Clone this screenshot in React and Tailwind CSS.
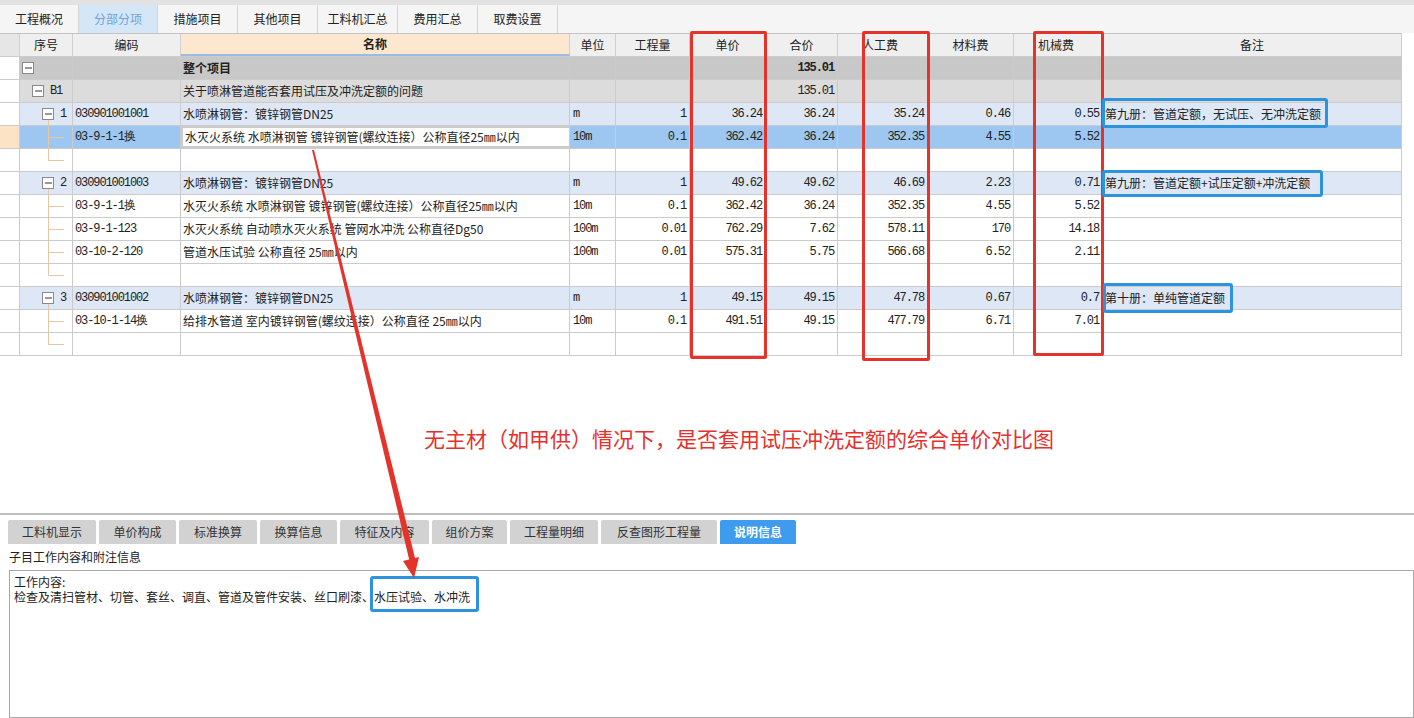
import React from 'react';

const W = ['w-[20px]', 'w-[53px]', 'w-[108px]', 'w-[389px]', 'w-[46px]', 'w-[74px]', 'w-[76px]', 'w-[72px]', 'w-[90px]', 'w-[86px]', 'w-[89px]', 'w-[299px]'];

const topTabs = ['工程概况', '分部分项', '措施项目', '其他项目', '工料机汇总', '费用汇总', '取费设置'];
const bottomTabs = [
  ['工料机显示', 'w-[88px]'],
  ['单价构成', 'w-[77px]'],
  ['标准换算', 'w-[78px]'],
  ['换算信息', 'w-[77px]'],
  ['特征及内容', 'w-[89px]'],
  ['组价方案', 'w-[75px]'],
  ['工程量明细', 'w-[88px]'],
  ['反查图形工程量', 'w-[116px]'],
  ['说明信息', 'w-[76px]'],
];

const headers = ['', '序号', '编码', '名称', '单位', '工程量', '单价', '合价', '人工费', '材料费', '机械费', '备注'];

const pipe = '03-9-1-1换';
const pipeName = '水灭火系统 水喷淋钢管 镀锌钢管(螺纹连接）公称直径25㎜以内';

const rows = [
  { kind: 'root', name: '整个项目', total: '135.01' },
  { kind: 'b1', name: '关于喷淋管道能否套用试压及冲洗定额的问题', total: '135.01' },
  { kind: 'item', seq: '1', code: '030901001001', name: '水喷淋钢管：镀锌钢管DN25', unit: 'm', nums: ['1', '36.24', '36.24', '35.24', '0.46', '0.55'], note: '第九册：管道定额，无试压、无冲洗定额' },
  { kind: 'child', selected: true, code: pipe, name: pipeName, unit: '10m', nums: ['0.1', '362.42', '36.24', '352.35', '4.55', '5.52'] },
  { kind: 'last' },
  { kind: 'item', seq: '2', code: '030901001003', name: '水喷淋钢管：镀锌钢管DN25', unit: 'm', nums: ['1', '49.62', '49.62', '46.69', '2.23', '0.71'], note: '第九册：管道定额+试压定额+冲洗定额' },
  { kind: 'child', code: pipe, name: pipeName, unit: '10m', nums: ['0.1', '362.42', '36.24', '352.35', '4.55', '5.52'] },
  { kind: 'child', code: '03-9-1-123', name: '水灭火系统 自动喷水灭火系统 管网水冲洗 公称直径Dg50', unit: '100m', nums: ['0.01', '762.29', '7.62', '578.11', '170', '14.18'] },
  { kind: 'child', code: '03-10-2-120', name: '管道水压试验 公称直径 25㎜以内', unit: '100m', nums: ['0.01', '575.31', '5.75', '566.68', '6.52', '2.11'] },
  { kind: 'last' },
  { kind: 'item', seq: '3', code: '030901001002', name: '水喷淋钢管：镀锌钢管DN25', unit: 'm', nums: ['1', '49.15', '49.15', '47.78', '0.67', '0.7'], note: '第十册：单纯管道定额' },
  { kind: 'child', code: '03-10-1-14换', name: '给排水管道 室内镀锌钢管(螺纹连接）公称直径 25㎜以内', unit: '10m', nums: ['0.1', '491.51', '49.15', '477.79', '6.71', '7.01'] },
  { kind: 'last' },
];

const mono = "font-['Liberation_Mono',monospace] text-[12px] tracking-[-1.1px]";

const Minus = ({ x }) => (
  <g>
    <rect x={x + 0.5} y={5.5} width={11} height={11} fill="#fff" stroke="#8a8a8a" />
    <line x1={x + 3} y1={11} x2={x + 10} y2={11} stroke="#333" />
  </g>
);

function TreeCell({ kind, seq }) {
  const line = '#e5c7a3';
  return (
    <div className="relative flex h-full w-full items-center">
      <svg className="absolute left-0 top-0" width="53" height="22">
        {kind === 'root' && <Minus x={2} />}
        {kind === 'b1' && <Minus x={12} />}
        {kind === 'item' && (
          <>
            <line x1={28.5} y1={17} x2={28.5} y2={22} stroke={line} />
            <Minus x={22} />
          </>
        )}
        {kind === 'child' && (
          <>
            <line x1={28.5} y1={0} x2={28.5} y2={22} stroke={line} />
            <line x1={28.5} y1={11.5} x2={44} y2={11.5} stroke={line} />
          </>
        )}
        {kind === 'last' && (
          <>
            <line x1={28.5} y1={0} x2={28.5} y2={11.5} stroke={line} />
            <line x1={28.5} y1={11.5} x2={44} y2={11.5} stroke={line} />
          </>
        )}
      </svg>
      {kind === 'b1' && <span className={`relative pl-[30px] ${mono}`}>B1</span>}
      {kind === 'item' && <span className={`relative pl-[40px] ${mono}`}>{seq}</span>}
    </div>
  );
}

function Row({ row }) {
  const { kind, selected } = row;
  const rowBg =
    kind === 'root' ? 'bg-[#c8c8c8]' : kind === 'b1' ? 'bg-[#dcdcdc]' : kind === 'item' ? 'bg-[#dde7f5]' : selected ? 'bg-[#9dc7f0]' : 'bg-white';
  const cell = 'h-full shrink-0 border-r border-[#cbcbcb] flex items-center overflow-hidden whitespace-nowrap';
  const nums = row.nums || [];
  return (
    <div className="flex h-[23px] border-b border-[#cbcbcb]">
      <div className={`${cell} ${W[0]} ${selected ? 'bg-[#fde3c6]' : 'bg-white'}`} />
      <div className={`${cell} ${W[1]} ${rowBg}`}>
        <TreeCell kind={kind} seq={row.seq} />
      </div>
      <div className={`${cell} ${W[2]} ${rowBg} pl-[2px] ${mono}`}>{row.code}</div>
      <div
        className={`${cell} ${W[3]} ${selected ? 'bg-white border-2 border-[#2e2e2e]' : rowBg} pl-[2px] ${kind === 'root' ? 'font-bold' : ''}`}
      >
        {row.name}
      </div>
      <div className={`${cell} ${W[4]} ${rowBg} pl-[3px] ${mono}`}>{row.unit}</div>
      {[0, 1, 2, 3, 4, 5].map((i) => (
        <div key={i} className={`${cell} ${W[5 + i]} ${rowBg} justify-end pr-[3px] ${mono} ${kind === 'root' ? 'font-bold' : ''}`}>
          {i === 2 && row.total ? row.total : nums[i]}
        </div>
      ))}
      <div className={`${cell} ${W[11]} ${rowBg} pl-[2px] text-[12px]`}>{row.note}</div>
    </div>
  );
}

function Grid() {
  return (
    <div className="relative w-[1402px] border-t border-r border-[#c4c4c4]">
      <div className="flex h-[23px] border-b border-[#cbcbcb] bg-[#efefef]">
        {headers.map((h, i) => (
          <div
            key={i}
            className={`${W[i]} h-full shrink-0 border-r border-[#cfcfcf] flex items-center ${
              i === 3 ? 'justify-center bg-[#fde8cf] border-b-2 border-b-[#9cbbe2] font-bold' : i === 8 || i === 10 ? 'pl-[24px]' : 'justify-center'
            } ${i === 0 ? 'bg-[#e6e6e6]' : ''}`}
          >
            {h}
          </div>
        ))}
      </div>
      {rows.map((r, i) => (
        <Row key={i} row={r} />
      ))}

      {/* red column marks */}
      <div className="absolute left-[690px] top-[-3px] h-[328px] w-[77px] rounded-[2px] border-[3px] border-[#e3332b]" />
      <div className="absolute left-[862px] top-[-3px] h-[330px] w-[68px] rounded-[2px] border-[3px] border-[#e3332b]" />
      <div className="absolute left-[1033px] top-[-3px] h-[325px] w-[71px] rounded-[2px] border-[3px] border-[#e3332b]" />

      {/* blue note marks */}
      <div className="absolute left-[1102px] top-[64px] h-[30px] w-[226px] rounded-[3px] border-[3px] border-[#2d93dd]" />
      <div className="absolute left-[1102px] top-[136px] h-[27px] w-[221px] rounded-[3px] border-[3px] border-[#2d93dd]" />
      <div className="absolute left-[1103px] top-[249px] h-[30px] w-[130px] rounded-[3px] border-[3px] border-[#2d93dd]" />
    </div>
  );
}

export default function App() {
  return (
    <div className="relative flex h-[718px] w-[1414px] flex-col overflow-hidden bg-white font-['Noto_Sans_CJK_SC',sans-serif] text-[12px] text-[#222]">
      <div className="h-[5px] shrink-0 bg-[#e2e2e2]" />
      <div className="flex h-[28px] shrink-0 bg-[#f5f5f5]">
        {topTabs.map((t, i) => (
          <div
            key={t}
            className={`flex h-full ${i >= 2 ? 'w-[80px]' : 'w-[79px]'} items-center justify-center border-r border-[#d6d6d6] text-[12px] ${
              i === 1 ? 'bg-[#d5e7f7] text-[#6aa4da]' : 'text-[#222]'
            }`}
          >
            {t}
          </div>
        ))}
      </div>

      <Grid />

      <div className="h-[157px] shrink-0 pl-[424px] pt-[67px] text-[21px] text-[#e5312c]">
        无主材（如甲供）情况下，是否套用试压冲洗定额的综合单价对比图
      </div>

      <div className="h-[2px] shrink-0 bg-[#bdbdbd]" />
      <div className="flex h-[29px] shrink-0 items-end gap-[3px] pl-[8px]">
        {bottomTabs.map(([t, w], i) => (
          <div
            key={t}
            className={`flex h-[24px] ${w} items-center justify-center rounded-t-[2px] text-[12px] ${
              i === 8 ? 'bg-[#3f9bee] font-bold text-white' : 'bg-[#d2d2d2] text-[#333]'
            }`}
          >
            {t}
          </div>
        ))}
      </div>
      <div className="flex h-[26px] shrink-0 items-center pl-[9px] text-[12px]">子目工作内容和附注信息</div>
      <div className="ml-[9px] flex-1 border border-[#a9a9a9] px-[4px] pt-[3px] text-[12px] leading-[15px]">
        <div>工作内容:</div>
        <div>检查及清扫管材、切管、套丝、调直、管道及管件安装、丝口刷漆、水压试验、水冲洗</div>
      </div>

      {/* blue mark on work content */}
      <div className="pointer-events-none absolute left-[370px] top-[576px] h-[36px] w-[109px] rounded-[3px] border-[3px] border-[#2d93dd]" />

      <svg className="pointer-events-none absolute left-0 top-0" width="1414" height="718">
        <polygon points="312,150 314,150 416,562 410,563" fill="#e3332b" />
        <polygon points="414,578 403,561 419,557" fill="#e3332b" />
      </svg>
    </div>
  );
}
